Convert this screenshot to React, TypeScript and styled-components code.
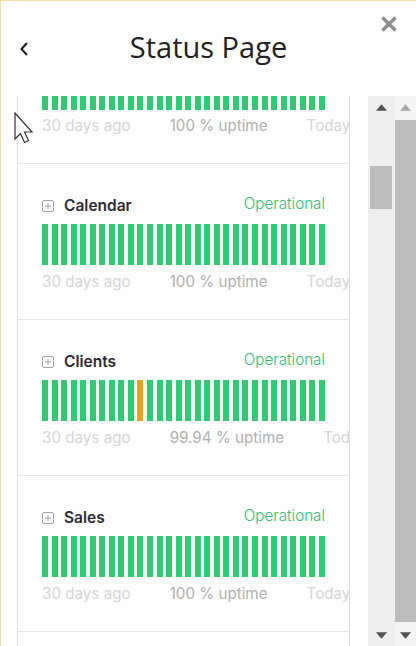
import styled, { createGlobalStyle } from 'styled-components';

const services = [
  { name: '', uptime: '100 % uptime', bars: 14 },
  { name: 'Calendar', uptime: '100 % uptime', bars: 41 },
  { name: 'Clients', uptime: '99.94 % uptime', bars: 41, incident: 10 },
  { name: 'Sales', uptime: '100 % uptime', bars: 41 },
];

export default function App() {
  return (
    <>
      <GlobalStyle />
      <Modal>
        <Header>
          <BackIcon width="10" height="16" viewBox="0 0 10 16">
            <path d="M8 2 2.500 8 8 14" />
          </BackIcon>
          <Title>Status Page</Title>
          <CloseIcon width="18" height="18" viewBox="0 0 18 18">
            <path d="M2.500 2.500 15.500 15.500M15.500 2.500 2.500 15.500" />
          </CloseIcon>
        </Header>
        <Body>
          <List>
            {services.map((service, index) => (
              <Row key={index} $first={!service.name}>
                {service.name && (
                  <RowHead>
                    <Service>
                      <PlusIcon width="12" height="12" viewBox="0 0 12 12">
                        <rect x="0.5" y="0.5" width="11" height="11" rx="1.500" />
                        <path d="M6 3v6M3 6h6" />
                      </PlusIcon>
                      <Name>{service.name}</Name>
                    </Service>
                    <Status>Operational</Status>
                  </RowHead>
                )}
                <Bars $height={service.bars}>
                  {Array.from({ length: 30 }, (_, i) => (
                    <Bar key={i} $warn={i === service.incident} />
                  ))}
                </Bars>
                <Legend $first={!service.name}>
                  <span>30 days ago</span>
                  <Uptime>{service.uptime}</Uptime>
                  <span>Today</span>
                </Legend>
              </Row>
            ))}
          </List>
          <Scrollbars>
            <Scrollbar>
              <Arrow viewBox="0 0 12 7" width="11" height="7">
                <path d="M6 0 12 7H0Z" />
              </Arrow>
              <InnerTrack>
                <InnerThumb />
              </InnerTrack>
              <Arrow viewBox="0 0 12 7" width="11" height="7">
                <path d="M0 0H12L6 7Z" />
              </Arrow>
            </Scrollbar>
            <Scrollbar $outer>
              <Arrow viewBox="0 0 12 7" width="11" height="7" $light>
                <path d="M6 0 12 7H0Z" />
              </Arrow>
              <OuterThumb />
              <Arrow viewBox="0 0 12 7" width="11" height="7">
                <path d="M0 0H12L6 7Z" />
              </Arrow>
            </Scrollbar>
          </Scrollbars>
        </Body>
        <Cursor width="20" height="34" viewBox="0 0 20 34">
          <path d="M1 1V27L6.500 21.500 10.500 30.500 14.500 28.500 10.500 20H18Z" />
        </Cursor>
      </Modal>
    </>
  );
}

const GlobalStyle = createGlobalStyle`
  html, body {
    margin: 0;
    padding: 0;
    background: #fff;
  }
  body {
    width: 416px;
    height: 646px;
    overflow: hidden;
    font-family: 'Inter', 'Open Sans', sans-serif;
  }
`;

const Modal = styled.div`
  position: relative;
  box-sizing: border-box;
  width: 416px;
  height: 646px;
  display: flex;
  flex-direction: column;
  background: #fefefe;
  border-top: 1px solid #f1e2a6;
  border-left: 1px solid #f1e2a6;
  overflow: hidden;
`;

const Header = styled.header`
  position: relative;
  flex: 0 0 95px;
  display: flex;
  align-items: flex-start;
  justify-content: center;
`;

const BackIcon = styled.svg`
  position: absolute;
  left: 18px;
  top: 40px;
  fill: none;
  stroke: #1c1c1c;
  stroke-width: 2;
`;

const CloseIcon = styled.svg`
  position: absolute;
  right: 18px;
  top: 14px;
  fill: none;
  stroke: #8e8e8e;
  stroke-width: 3.4;
`;

const Title = styled.h1`
  margin: 26px 0 0;
  font-family: 'Open Sans', sans-serif;
  font-size: 29px;
  line-height: 40px;
  font-weight: 400;
  color: #222;
`;

const Body = styled.div`
  flex: 1;
  min-height: 0;
  display: flex;
  padding-left: 16px;
`;

const List = styled.div`
  box-sizing: border-box;
  width: 333px;
  border-left: 1px solid #e3e3e3;
  border-right: 1px solid #dcdcdc;
  overflow: hidden;
`;

const Row = styled.section<{ $first: boolean }>`
  box-sizing: border-box;
  height: ${(p) => (p.$first ? '68px' : '156px')};
  padding: ${(p) => (p.$first ? '0' : '29px')} 0 0 24px;
  border-bottom: 1px solid #e6e6e6;
`;

const RowHead = styled.div`
  width: 283px;
  height: 31px;
  display: flex;
  justify-content: space-between;
  align-items: flex-start;
`;

const Service = styled.div`
  display: flex;
  align-items: center;
  gap: 10px;
  padding-top: 3px;
`;

const PlusIcon = styled.svg`
  fill: none;
  stroke: #a3a3a3;
  stroke-width: 1;
`;

const Name = styled.span`
  font-size: 15.5px;
  line-height: 20px;
  font-weight: 600;
  color: #2b2b33;
`;

const Status = styled.span`
  margin-top: 1px;
  font-size: 15.2px;
  line-height: 20px;
  font-weight: 300;
  color: #2fbf71;
`;

const Bars = styled.div<{ $height: number }>`
  width: 283px;
  height: ${(p) => p.$height}px;
  display: flex;
  justify-content: space-between;
`;

const Bar = styled.div<{ $warn: boolean }>`
  width: 6px;
  background: ${(p) => (p.$warn ? '#e9a21a' : '#2ecc71')};
`;

const Legend = styled.div<{ $first: boolean }>`
  margin-top: ${(p) => (p.$first ? '6px' : '7px')};
  display: flex;
  gap: 39px;
  white-space: nowrap;
  font-size: 15.2px;
  line-height: 20px;
  color: #d6d6d6;
`;

const Uptime = styled.span`
  color: #b0b0b0;
`;

const Scrollbars = styled.div`
  margin-left: 18px;
  flex: 1;
  display: flex;
`;

const Scrollbar = styled.div<{ $outer?: boolean }>`
  flex: ${(p) => (p.$outer ? '0 0 21px' : '0 0 27px')};
  display: flex;
  flex-direction: column;
  align-items: center;
  justify-content: space-between;
  padding: 8px 0 7px;
  box-sizing: border-box;
  background: ${(p) => (p.$outer ? '#f4f4f4' : '#efefef')};
`;

const Arrow = styled.svg<{ $light?: boolean }>`
  flex: none;
  fill: ${(p) => (p.$light ? '#a9a9a9' : '#505050')};
`;

const InnerTrack = styled.div`
  flex: 1;
  width: 100%;
  padding: 55px 3px 0 2px;
  box-sizing: border-box;
`;

const InnerThumb = styled.div`
  height: 43px;
  background: #bdbdbd;
`;

const OuterThumb = styled.div`
  flex: 0 0 502px;
  align-self: stretch;
  margin: 5px 0 6px;
  background: #bdbdbd;
`;

const Cursor = styled.svg`
  position: absolute;
  left: 13px;
  top: 111px;
  fill: #fff;
  stroke: #333;
  stroke-width: 1.2;
`;
